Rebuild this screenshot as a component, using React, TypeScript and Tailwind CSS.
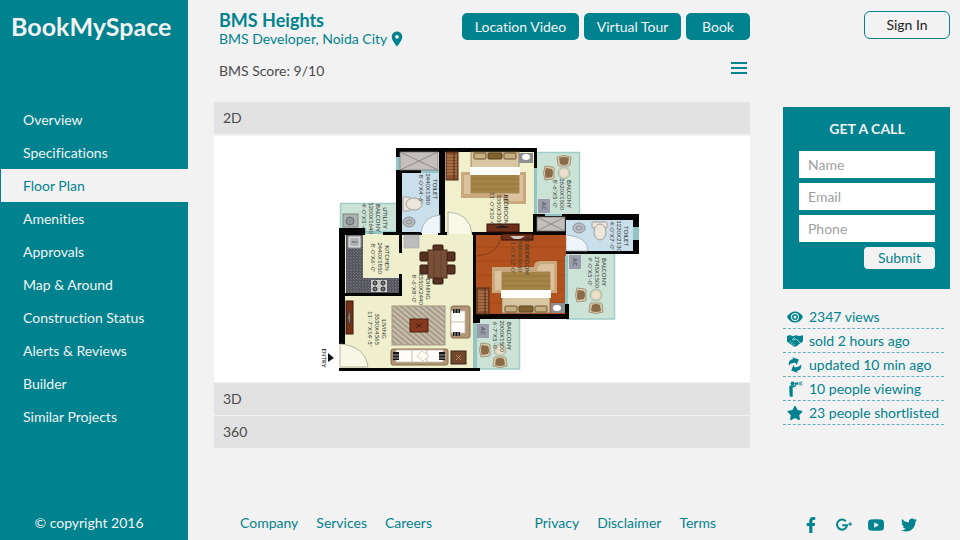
import { useState, type ReactNode } from "react";
import { FaFacebookF, FaStar, FaTwitter } from "react-icons/fa";
import { MdLocationOn } from "react-icons/md";

const navItems = [
  "Overview",
  "Specifications",
  "Floor Plan",
  "Amenities",
  "Approvals",
  "Map & Around",
  "Construction Status",
  "Alerts & Reviews",
  "Builder",
  "Similar Projects",
];

function EyeIcon() {
  return (
    <svg viewBox="0 0 16 12" className="w-4" fill="currentColor" aria-hidden="true">
      <path
        fillRule="evenodd"
        d="M0 6Q3 .5 8 .5T16 6Q13 11.500 8 11.500T0 6zM8 2A4 4 0 1 0 8 10 4 4 0 0 0 8 2z"
      />
      <path fillRule="evenodd" d="M8 3A3 3 0 1 0 8 9 3 3 0 0 0 8 3zM8 4.500A1.500 1.500 0 1 1 8 7.500 1.500 1.500 0 0 1 8 4.500z" />
    </svg>
  );
}

function HandshakeIcon() {
  return (
    <svg viewBox="0 0 16 12" className="w-4" aria-hidden="true">
      <path
        fill="currentColor"
        d="M0 1L3 0 6 1.200 8.500.3 12.500 1 16 .2V6.500L13.500 8 9.500 11.300Q8 12.200 6.500 11.300L2.500 8.500 0 6.500z"
      />
      <path
        fill="none"
        stroke="#f2f2f2"
        strokeWidth=".7"
        d="M7.500 2.200L5.500 4.600Q6.500 5.800 8.200 4.200L9.600 4.300 13 7.600M2.600 7.600L4.200 6.200M4.200 9L5.800 7.500M6 10.300L7.400 8.800"
      />
    </svg>
  );
}

function UpdateIcon() {
  return (
    <svg viewBox="0 0 16 16" className="size-4" fill="currentColor" aria-hidden="true">
      <path d="M2 8.500C1 5 3 2.300 6.200 2L5.400.2 11.800 2.400 9.600 8 8.400 5.800C5.600 5.600 3.400 6.400 2 8.500z" />
      <path d="M14 7.500c1 3.500-1 6.200-4.200 6.500l.8 1.800L4.200 13.600 6.400 8l1.200 2.200c2.800.2 5-.6 6.400-2.700z" />
    </svg>
  );
}

function ViewerIcon() {
  return (
    <svg viewBox="0 0 16 16" className="size-4" fill="currentColor" aria-hidden="true">
      <circle cx="5.500" cy="2.400" r="1.900" />
      <path d="M2.200 6.300C2.300 4.900 3.300 4.300 4.500 4.300L7.500 4.500 8.700 2.800l1 .8-1.500 2.500-2.600.4.200 9.300H2.700z" />
      <path d="M7.500 1.700l3.500-.5v2.600l-3.500-.5z" />
      <path d="M11.500 1l4.300-.8-.8 2.200.5 2.400-4-.9z" opacity=".55" />
    </svg>
  );
}

function GooglePlusIcon() {
  return (
    <svg viewBox="0 0 16 14" className="w-4" aria-hidden="true">
      <path
        d="M9.800 3.300A5 5 0 1 0 11 7.300H6.300"
        fill="none"
        stroke="currentColor"
        strokeWidth="2"
      />
      <path d="M12.400 5.500h1.200v-1.400h1v1.400H16v1.200h-1.400v1.400h-1V6.700h-1.200z" fill="currentColor" />
    </svg>
  );
}

function YoutubeIcon() {
  return (
    <svg viewBox="0 0 16 12" className="w-4" fill="currentColor" aria-hidden="true">
      <path
        fillRule="evenodd"
        d="M2.500.4Q8-.1 13.500.4 15.600.6 15.800 2.600q.3 3.400 0 6.800-.2 2-2.300 2.200-5.500.5-11 0Q.4 11.400.2 9.400-.1 6 .2 2.600.4.6 2.500.4zM6.200 3.300v5.400L11 6z"
      />
    </svg>
  );
}

function Label({ x, y, lines }: { x: number; y: number; lines: string[] }) {
  return (
    <g transform={`translate(${x} ${y}) rotate(90)`} fill="#34352f" fontSize="6" textAnchor="middle">
      {lines.map((line, i) => (
        <text key={line} x="0" y={i * 7}>
          {line}
        </text>
      ))}
    </g>
  );
}

function Chair({ x, y, turn = 0 }: { x: number; y: number; turn?: number }) {
  return (
    <g transform={`translate(${x} ${y}) rotate(${turn})`}>
      <path d="M-7-4Q0-7 7-4L6 4Q5 6 3 5H-3Q-5 6-6 4z" fill="#d9ccad" stroke="#8d7b62" strokeWidth=".7" />
      <path d="M-5-3Q0-5 5-3L4 3Q0 5-4 3z" fill="#8b6a49" />
    </g>
  );
}

function RoundTable({ x, y }: { x: number; y: number }) {
  return (
    <g>
      <circle cx={x} cy={y} r="6" fill="#c9cfb9" stroke="#a8aa92" strokeWidth=".7" />
      <circle cx={x} cy={y} r="4" fill="#eee0ca" />
    </g>
  );
}

function AirCon({ x, y }: { x: number; y: number }) {
  return (
    <g>
      <rect x={x} y={y} width="12" height="14" fill="#9a9cac" />
      <text transform={`translate(${x + 4} ${y + 7}) rotate(90)`} fontSize="5" textAnchor="middle" fill="#34353f">
        A.C
      </text>
    </g>
  );
}

function Bed({ x, y, flip = false }: { x: number; y: number; flip?: boolean }) {
  return (
    <g transform={flip ? `translate(${x} ${y}) scale(1 -1)` : `translate(${x} ${y})`}>
      <path d="M-10 20H55V52H38Q32 52 32 46H-10z" fill="#c9a87e" />
      <path d="M-7 23H52V49H40Q36 49 35 42H-7z" fill="#dcc39d" />
      <rect width="48" height="41" fill="#d8c5a2" stroke="#8a6b43" strokeWidth=".7" />
      <rect x="3" y="1" width="12" height="6" rx="1" fill="#c6b083" stroke="#6e522f" />
      <rect x="17" y="1" width="14" height="6" rx="1" fill="#80642f" stroke="#5d431f" />
      <rect x="33" y="1" width="12" height="6" rx="1" fill="#c6b083" stroke="#6e522f" />
      <rect y="22" width="48" height="19" fill="#a48447" />
      <path d="M0 27H48M0 32H48M0 37H48" stroke="#94763d" strokeWidth="1" />
      <rect x="-1" y="15" width="50" height="8" fill="#fffefa" />
    </g>
  );
}

function Wardrobe({ x, y, height }: { x: number; y: number; height: number }) {
  return (
    <g>
      <rect x={x} y={y} width="12" height={height} fill="#8a5230" stroke="#4e2b17" />
      {[4, 7, 10, 13, 16, 19, 22].map((d) => (
        <path key={d} d={`M${x + 1} ${y + d}h10`} stroke="#c08a5e" strokeWidth="1" />
      ))}
      <path d={`M${x + 8} ${y}v${height}`} stroke="#4e2b17" strokeWidth="1" />
    </g>
  );
}

function Shaft({ x, y, width, height }: { x: number; y: number; width: number; height: number }) {
  return (
    <g stroke="#77736f" strokeWidth=".7">
      <rect x={x} y={y} width={width} height={height} fill="#c4bfbc" />
      <path d={`M${x} ${y}l${width} ${height}M${x + width} ${y}l${-width} ${height}`} />
    </g>
  );
}

function FloorPlan() {
  return (
    <svg viewBox="214 136 536 246" className="block w-full bg-white" role="img" aria-label="2D floor plan">
      <defs>
        <pattern id="weave" width="4" height="4" patternUnits="userSpaceOnUse" patternTransform="rotate(40)">
          <rect width="4" height="4" fill="#c8bfae" />
          <path d="M0 1H4" stroke="#948772" strokeWidth="1.300" />
        </pattern>
        <pattern id="granite" width="3" height="3" patternUnits="userSpaceOnUse">
          <rect width="3" height="3" fill="#55565d" />
          <path d="M0 0h1v1H0zM2 2h1v1H2z" fill="#74757d" />
        </pattern>
      </defs>

      {/* Balconies */}
      <g fill="#cbe3d6" stroke="#9fcdc8" strokeWidth="1.500">
        <rect x="340.500" y="203.500" width="57" height="28" />
        <rect x="536" y="152.500" width="43.500" height="64" />
        <rect x="567" y="252" width="47.500" height="67" />
        <rect x="475" y="318" width="44.500" height="51" />
      </g>

      {/* Floors */}
      <path d="M345 234H475V369H340V344H345z" fill="#efefcd" />
      <rect x="444" y="151" width="92" height="83" fill="#f0f0cc" />
      <rect x="401" y="172" width="41" height="61" fill="#c9dfec" />
      <rect x="566" y="219" width="68" height="33" fill="#c9dfec" />
      <rect x="476" y="234" width="90" height="81" fill="#b2531f" />
      <path d="M476 247H566M476 261H566M476 275H566M476 289H566M476 303H566" stroke="#a14918" strokeWidth="1" />

      {/* Walls */}
      <g fill="#050505">
        <path d="M396 148H537V168H534V152H445V234H439V152H400V157H396z" />
        <path d="M396 170H441V173H402V232H422V235H402V253H399V235H383V232H396z" />
        <path d="M339 228H365V235H345V344H339z" />
        <path d="M339 293H399V274H402V296H339zM339 368H480V371H339z" />
        <path d="M472 232H533V214H639V254H566V251H633V220H566V235H472z" />
        <path d="M473 235H476V314H565V304H569V319H480V323H473z" />
        <rect x="438" y="232" width="9" height="3" />
      </g>
      <g fill="#92c5c3">
        <rect x="396" y="157" width="4" height="13" />
        <rect x="421" y="170" width="18" height="3" />
        <rect x="534" y="168" width="3" height="46" />
        <rect x="633" y="227" width="6" height="13" />
        <rect x="565" y="256" width="3" height="48" />
        <rect x="473" y="323" width="4" height="45" />
        <rect x="365" y="231" width="18" height="3" />
        <rect x="545" y="214" width="17" height="2" />
      </g>
      <Shaft x={400} y={152} width={38} height={18} />
      <Shaft x={537} y={217} width={28} height={14} />

      {/* Upper bedroom */}
      <Wardrobe x={446} y={152} height={28} />
      <Bed x={471} y={152} />
      <rect x="519" y="153" width="14" height="10" fill="#8d8e8f" />
      <ellipse cx="526" cy="157" rx="4" ry="3" fill="#fff" />
      <rect x="487" y="224" width="32" height="8" fill="#702f19" stroke="#321309" />
      <path d="M495 228q7-5 15 0z" fill="#23201f" />
      <path d="M448 234V212Q470 213 472 234" fill="#f8f8e6" stroke="#99998b" strokeWidth=".7" />
      <Label x={504} y={210} lines={["BEDROOM", "3350X3050", "11'-0\"X10'-0\""]} />

      {/* Lower bedroom */}
      <Wardrobe x={477} y={288} height={26} />
      <Bed x={502} y={313} flip />
      <rect x="551" y="303" width="14" height="10" fill="#8d8e8f" />
      <ellipse cx="557" cy="308" rx="4" ry="3" fill="#fff" />
      <rect x="502" y="234" width="31" height="6" fill="#702f19" stroke="#321309" />
      <path d="M510 236h15l-5 3h-6z" fill="#d1c6bd" />
      <path d="M477 256Q499 254 501 236" fill="none" stroke="#753717" strokeWidth=".8" />
      <Label x={525} y={256} lines={["M.BEDROOM", "3350X3650", "11'-0\"X12'-0\""]} />

      {/* Bathrooms */}
      <g fill="#ece5dc" stroke="#988e85" strokeWidth=".8">
        <rect x="403" y="197" width="7" height="14" rx="1" />
        <ellipse cx="414" cy="204" rx="8" ry="6" />
        <rect x="592" y="222" width="15" height="6" rx="1" />
        <ellipse cx="600" cy="232" rx="6" ry="8" />
      </g>
      <g fill="#b9bdc0" stroke="#7d8387" strokeWidth=".8">
        <ellipse cx="409" cy="222" rx="6" ry="5" />
        <ellipse cx="409" cy="222" rx="3" ry="2" />
        <ellipse cx="579" cy="228" rx="6" ry="5" />
        <ellipse cx="579" cy="228" rx="3" ry="2" />
      </g>
      <path d="M440 233V215Q423 216 421 233M567 235Q588 237 588 251H567" fill="#edf5f8" stroke="#909da3" strokeWidth=".7" />
      <Label x={433} y={189} lines={["TOILET", "2440X1380", "8'-0\"X4'-6\""]} />
      <Label x={624} y={236} lines={["TOILET", "1220X2130", "4'-0\"X7'-0\""]} />

      {/* Kitchen and utility */}
      <rect x="343" y="214" width="15" height="13" fill="#aeb3b0" stroke="#7c8582" />
      <circle cx="350" cy="221" r="4" fill="#8e9697" stroke="#656e70" />
      <path d="M346 235H363V278H399V293H346z" fill="url(#granite)" />
      <rect x="348" y="236" width="13" height="12" rx="1" fill="#d5d7d8" stroke="#8a8c8f" />
      <rect x="350" y="238" width="9" height="8" rx="2" fill="#aeb1b4" />
      <path d="M352 242h5" stroke="#55585c" />
      <rect x="371" y="280" width="16" height="12" fill="#c9c9c9" />
      <g fill="#77797b" stroke="#232426" strokeWidth="1">
        <circle cx="375" cy="283" r="2" />
        <circle cx="383" cy="283" r="2" />
        <circle cx="375" cy="289" r="2" />
        <circle cx="383" cy="289" r="2" />
      </g>
      <rect x="404" y="235" width="15" height="13" fill="#bcbcbc" stroke="#a5a5a5" strokeWidth=".6" />
      <Label x={383} y={218} lines={["UTILITY", "BALCONY", "1200X1640", "4'-0\"X5'-6\""]} />
      <Label x={385} y={258} lines={["KITCHEN", "2440X1850", "8'-0\"X6'-0\""]} />

      {/* Dining */}
      <g fill="#573220" stroke="#2e180e" strokeWidth="1">
        <rect x="433" y="245" width="10" height="6" rx="1" />
        <rect x="433" y="278" width="10" height="6" rx="1" />
        <rect x="420" y="252" width="8" height="9" rx="1" />
        <rect x="420" y="265" width="8" height="9" rx="1" />
        <rect x="447" y="252" width="8" height="9" rx="1" />
        <rect x="447" y="265" width="8" height="9" rx="1" />
      </g>
      <rect x="428" y="250" width="19" height="28" fill="#785039" stroke="#4b2a19" />
      <path d="M434 250V278M441 250V278" stroke="#61402c" />
      <Label x={426} y={289} lines={["DINING", "2550X2440", "8'-6\"X8'-0\""]} />

      {/* Living room */}
      <rect x="346" y="301" width="7" height="33" fill="#753018" stroke="#41180b" />
      <path d="M350 310q-4 8 0 15z" fill="#c5c6c6" stroke="#3c3d3f" />
      <rect x="392" y="306" width="53" height="39" fill="url(#weave)" stroke="#a39782" />
      <rect x="410" y="319" width="18" height="13" fill="#85391f" stroke="#542110" />
      <path d="M416 328l6-5M416 324l5 3" stroke="#4a1d0f" />
      <g stroke="#8a6d51" strokeWidth="1">
        <rect x="451" y="306" width="19" height="32" rx="2" fill="#b09577" />
        <rect x="391" y="349" width="57" height="16" rx="2" fill="#b09577" />
      </g>
      <g fill="#fdfcf8" stroke="#c5bba9" strokeWidth=".7">
        <rect x="451" y="311" width="14" height="11" />
        <rect x="451" y="322" width="14" height="11" />
        <rect x="396" y="350" width="16" height="12" />
        <rect x="412" y="350" width="15" height="12" />
        <rect x="427" y="350" width="16" height="12" />
        <path d="M417 356l5-5 7 5-6 5z" />
      </g>
      <path d="M453 309h7v4h-7zM453 332h7v4h-7zM393 352h6v8h-6zM439 352h6v8h-6z" fill="#17181c" />
      <path d="M455 309v4M458 309v4M455 332v4M458 332v4M393 355h6M393 358h6M439 355h6M439 358h6" stroke="#dadada" strokeWidth=".7" />
      <rect x="451" y="351" width="15" height="13" fill="#73482f" stroke="#41251a" />
      <path d="M456 355l5 5M461 355l-5 5" stroke="#b08b65" />
      <path d="M340 344Q365 346 368 367H340z" fill="#f8f7e5" stroke="#999a83" strokeWidth=".7" />
      <Label x={382} y={329} lines={["LIVING", "3530X4365", "11'-7\"X14'-5\""]} />

      {/* Balcony furniture */}
      <Chair x={564} y={161} />
      <Chair x={549} y={173} turn={-90} />
      <RoundTable x={564} y={173} />
      <AirCon x={538} y={199} />
      <Label x={567} y={194} lines={["BALCONY", "2620X1500", "8'-6\"X5'-0\""]} />
      <Chair x={581} y={295} turn={-90} />
      <Chair x={596} y={308} turn={180} />
      <RoundTable x={596} y={295} />
      <AirCon x={569} y={255} />
      <Label x={602} y={272} lines={["BALCONY", "2745X1500", "9'-0\"X5'-0\""]} />
      <Chair x={485} y={350} turn={-90} />
      <Chair x={500} y={362} turn={180} />
      <RoundTable x={500} y={350} />
      <AirCon x={477} y={324} />
      <Label x={507} y={336} lines={["BALCONY", "2000X1500", "6'-7\"X5'-0\""]} />

      <text transform="translate(322 358) rotate(90)" fontSize="6" textAnchor="middle" fill="#111">
        ENTRY
      </text>
      <path d="M328 353V362L334 358z" fill="#111" />
    </svg>
  );
}

function Accordion() {
  const [open, setOpen] = useState("2D");
  return (
    <div className="mt-5 flex flex-col gap-px">
      {["2D", "3D", "360"].map((name) => (
        <section key={name} className="flex flex-col gap-0.5">
          <button
            type="button"
            aria-expanded={open === name}
            onClick={() => setOpen(name)}
            className="h-8 bg-[#e2e2e2] px-[9px] text-left text-[#4b4b4b]"
          >
            {name}
          </button>
          {open === name && <FloorPlan />}
        </section>
      ))}
    </div>
  );
}

const stats: { icon: ReactNode; text: string }[] = [
  { icon: <EyeIcon />, text: "2347 views" },
  { icon: <HandshakeIcon />, text: "sold 2 hours ago" },
  { icon: <UpdateIcon />, text: "updated 10 min ago" },
  { icon: <ViewerIcon />, text: "10 people viewing" },
  { icon: <FaStar className="size-4" />, text: "23 people shortlisted" },
];

const socials: { name: string; icon: ReactNode }[] = [
  { name: "Facebook", icon: <FaFacebookF className="size-4" /> },
  { name: "Google Plus", icon: <GooglePlusIcon /> },
  { name: "YouTube", icon: <YoutubeIcon /> },
  { name: "Twitter", icon: <FaTwitter className="size-4" /> },
];

export default function App() {
  const [active, setActive] = useState("Floor Plan");
  return (
    <div className="flex min-h-screen bg-[#f2f2f2] font-[Lato,sans-serif] text-sm text-[#00838f] [font-variant-ligatures:none]">
      <aside className="flex w-[188px] shrink-0 flex-col bg-[#00838f] text-[#f2f2f2]">
        <h1 className="px-[11px] pt-2.5 text-[25px] leading-8 font-bold">BookMySpace</h1>
        <nav className="mt-[61px] flex flex-col pl-px">
          {navItems.map((item) => (
            <a
              key={item}
              href="#"
              onClick={() => setActive(item)}
              className={
                item === active
                  ? "bg-[#f2f2f2] pl-[22px] leading-[33px] text-[#00838f]"
                  : "pl-[22px] leading-[33px]"
              }
            >
              {item}
            </a>
          ))}
        </nav>
        <p className="mt-auto pr-2.5 pb-[7px] text-center">© copyright 2016</p>
      </aside>

      <main className="flex min-w-0 flex-1 flex-col pl-[26px]">
        <header className="flex items-start justify-between pt-2.5 pl-[5px]">
          <div>
            <h2 className="text-lg leading-5 font-bold">BMS Heights</h2>
            <p className="flex items-center gap-px leading-[18px]">
              BMS Developer, Noida City
              <MdLocationOn className="size-[18px]" />
            </p>
          </div>
          <div className="mt-[3px] flex gap-[5px] text-[#f2f2f2]">
            <button type="button" className="h-[27px] w-[117px] rounded-[5px] bg-[#00838f]">
              Location Video
            </button>
            <button type="button" className="h-[27px] w-[97px] rounded-[5px] bg-[#00838f]">
              Virtual Tour
            </button>
            <button type="button" className="h-[27px] w-16 rounded-[5px] bg-[#00838f]">
              Book
            </button>
          </div>
        </header>
        <div className="mt-3 flex items-start justify-between pr-[3px] pl-[5px]">
          <p className="pt-px pb-px text-[#4b4b4b]">BMS Score: 9/10</p>
          <button type="button" aria-label="Menu" className="flex w-4 flex-col gap-[3px] pt-[2px]">
            <span className="h-0.5 w-full bg-[#00838f]" />
            <span className="h-0.5 w-full bg-[#00838f]" />
            <span className="h-0.5 w-full bg-[#00838f]" />
          </button>
        </div>
        <Accordion />
        <footer className="mt-auto flex justify-between pr-[34px] pb-[7px] pl-[26px]">
          <nav className="flex gap-[18px]">
            <a href="#">Company</a>
            <a href="#">Services</a>
            <a href="#">Careers</a>
          </nav>
          <nav className="flex gap-[18px]">
            <a href="#">Privacy</a>
            <a href="#">Disclaimer</a>
            <a href="#">Terms</a>
          </nav>
        </footer>
      </main>

      <aside className="mr-2.5 ml-[33px] flex w-[167px] shrink-0 flex-col">
        <button
          type="button"
          className="mt-[11px] h-7 w-[86px] self-end rounded-md border border-[#00838f] text-[#222]"
        >
          Sign In
        </button>
        <form
          onSubmit={(e) => e.preventDefault()}
          className="mt-[68px] flex flex-col gap-[5px] bg-[#00838f] pt-3 pr-[15px] pb-5 pl-4"
        >
          <h2 className="mb-[7px] text-center leading-5 font-bold text-[#f2f2f2]">GET A CALL</h2>
          {["Name", "Email", "Phone"].map((field) => (
            <input
              key={field}
              type="text"
              aria-label={field}
              placeholder={field}
              className="h-[27px] w-full bg-white px-[9px] text-[#4b4b4b] placeholder:text-[#a0a0a0]"
            />
          ))}
          <button type="submit" className="h-[22px] w-[71px] self-end rounded bg-[#f2f2f2]">
            Submit
          </button>
        </form>
        <ul className="mt-4 mr-1.5">
          {stats.map(({ icon, text }) => (
            <li
              key={text}
              className="flex h-6 items-center gap-0.5 border-b border-dashed border-[#00838f]/60 whitespace-nowrap"
            >
              <span className="flex w-6 shrink-0 justify-center">{icon}</span>
              {text}
            </li>
          ))}
        </ul>
        <nav className="mt-auto mr-[33px] mb-[7px] ml-5 flex items-center justify-between">
          {socials.map(({ name, icon }) => (
            <a key={name} href="#" aria-label={name}>
              {icon}
            </a>
          ))}
        </nav>
      </aside>
    </div>
  );
}
